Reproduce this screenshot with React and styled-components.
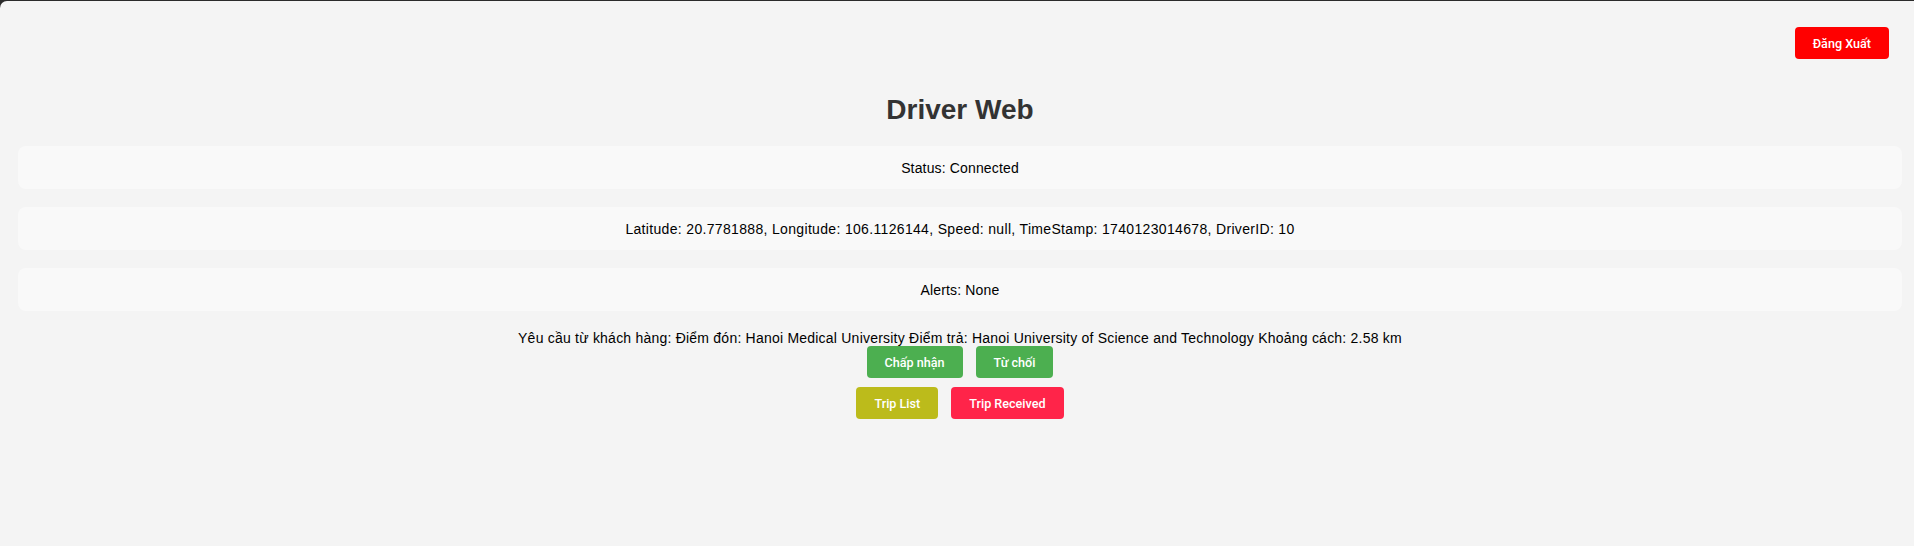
import React from "react";
import styled, { createGlobalStyle } from "styled-components";

const GlobalStyle = createGlobalStyle`
    html, body{
        margin: 0;
        padding: 0;
        background-color: #2b2b2b;
    }
    *{
        box-sizing: border-box;
    }
`

const request = {
    pickup: "Hanoi Medical University",
    dropoff: "Hanoi University of Science and Technology",
    distance: "2.58 km"
}

const location = "Latitude: 20.7781888, Longitude: 106.1126144, Speed: null, TimeStamp: 1740123014678, DriverID: 10"

const App = () => {
    return (
        <>
            <GlobalStyle/>
            <Container>
                <Header>
                    <Button color="#ff0000" onClick={() => {}}>Đăng Xuất</Button>
                </Header>
                <Title>Driver Web</Title>
                <InfoList>
                    <InfoBox>Status: Connected</InfoBox>
                    <InfoBox digits>{location}</InfoBox>
                    <InfoBox>Alerts: None</InfoBox>
                </InfoList>
                <RequestText>
                    Yêu cầu từ khách hàng: Điểm đón: {request.pickup} Điểm trả: {request.dropoff} Khoảng cách: {request.distance}
                </RequestText>
                <ButtonRow>
                    <Button color="#4caf50">Chấp nhận</Button>
                    <Button color="#4caf50">Từ chối</Button>
                </ButtonRow>
                <ButtonRow top={9}>
                    <Button color="#bcbb1b">Trip List</Button>
                    <Button color="#ff2449">Trip Received</Button>
                </ButtonRow>
            </Container>
        </>
    )
}

export default App;

const Container = styled.div`
    min-height: calc(100vh - 1px);
    margin-top: 1px;
    padding: 26px 12px 20px 18px;
    background-color: #f4f4f4;
    border-top-left-radius: 7px;
    font-family: "Liberation Sans", Arial, sans-serif;
    font-size: 14px;
    color: #000;
`

const Header = styled.div`
    display: flex;
    justify-content: flex-end;
    padding-right: 13px;
`

const Title = styled.h1`
    margin: 35px 0 20px 0;
    text-align: center;
    font-size: 28px;
    line-height: 32px;
    font-weight: 700;
    color: #333;
`

const InfoList = styled.div`
    display: flex;
    flex-direction: column;
    gap: 18px;
`

const InfoBox = styled.div`
    height: 43px;
    display: flex;
    align-items: center;
    justify-content: center;
    padding-top: 1px;
    background-color: #f9f9f9;
    border-radius: 8px;
    letter-spacing: ${({digits}) => digits ? "0.33px" : "0.15px"};
`

const RequestText = styled.p`
    margin: 19px 0 0 0;
    text-align: center;
    line-height: 16px;
    letter-spacing: 0.22px;
`

const ButtonRow = styled.div`
    display: flex;
    justify-content: center;
    gap: 13px;
    margin-top: ${({top}) => top || 0}px;
`

const Button = styled.button`
    height: 32px;
    padding: 0 18px;
    border: none;
    border-radius: 4px;
    background-color: ${({color}) => color};
    color: #fff;
    font-family: Roboto, "Liberation Sans", sans-serif;
    font-size: 12.6px;
    font-weight: 500;
    cursor: pointer;
`
